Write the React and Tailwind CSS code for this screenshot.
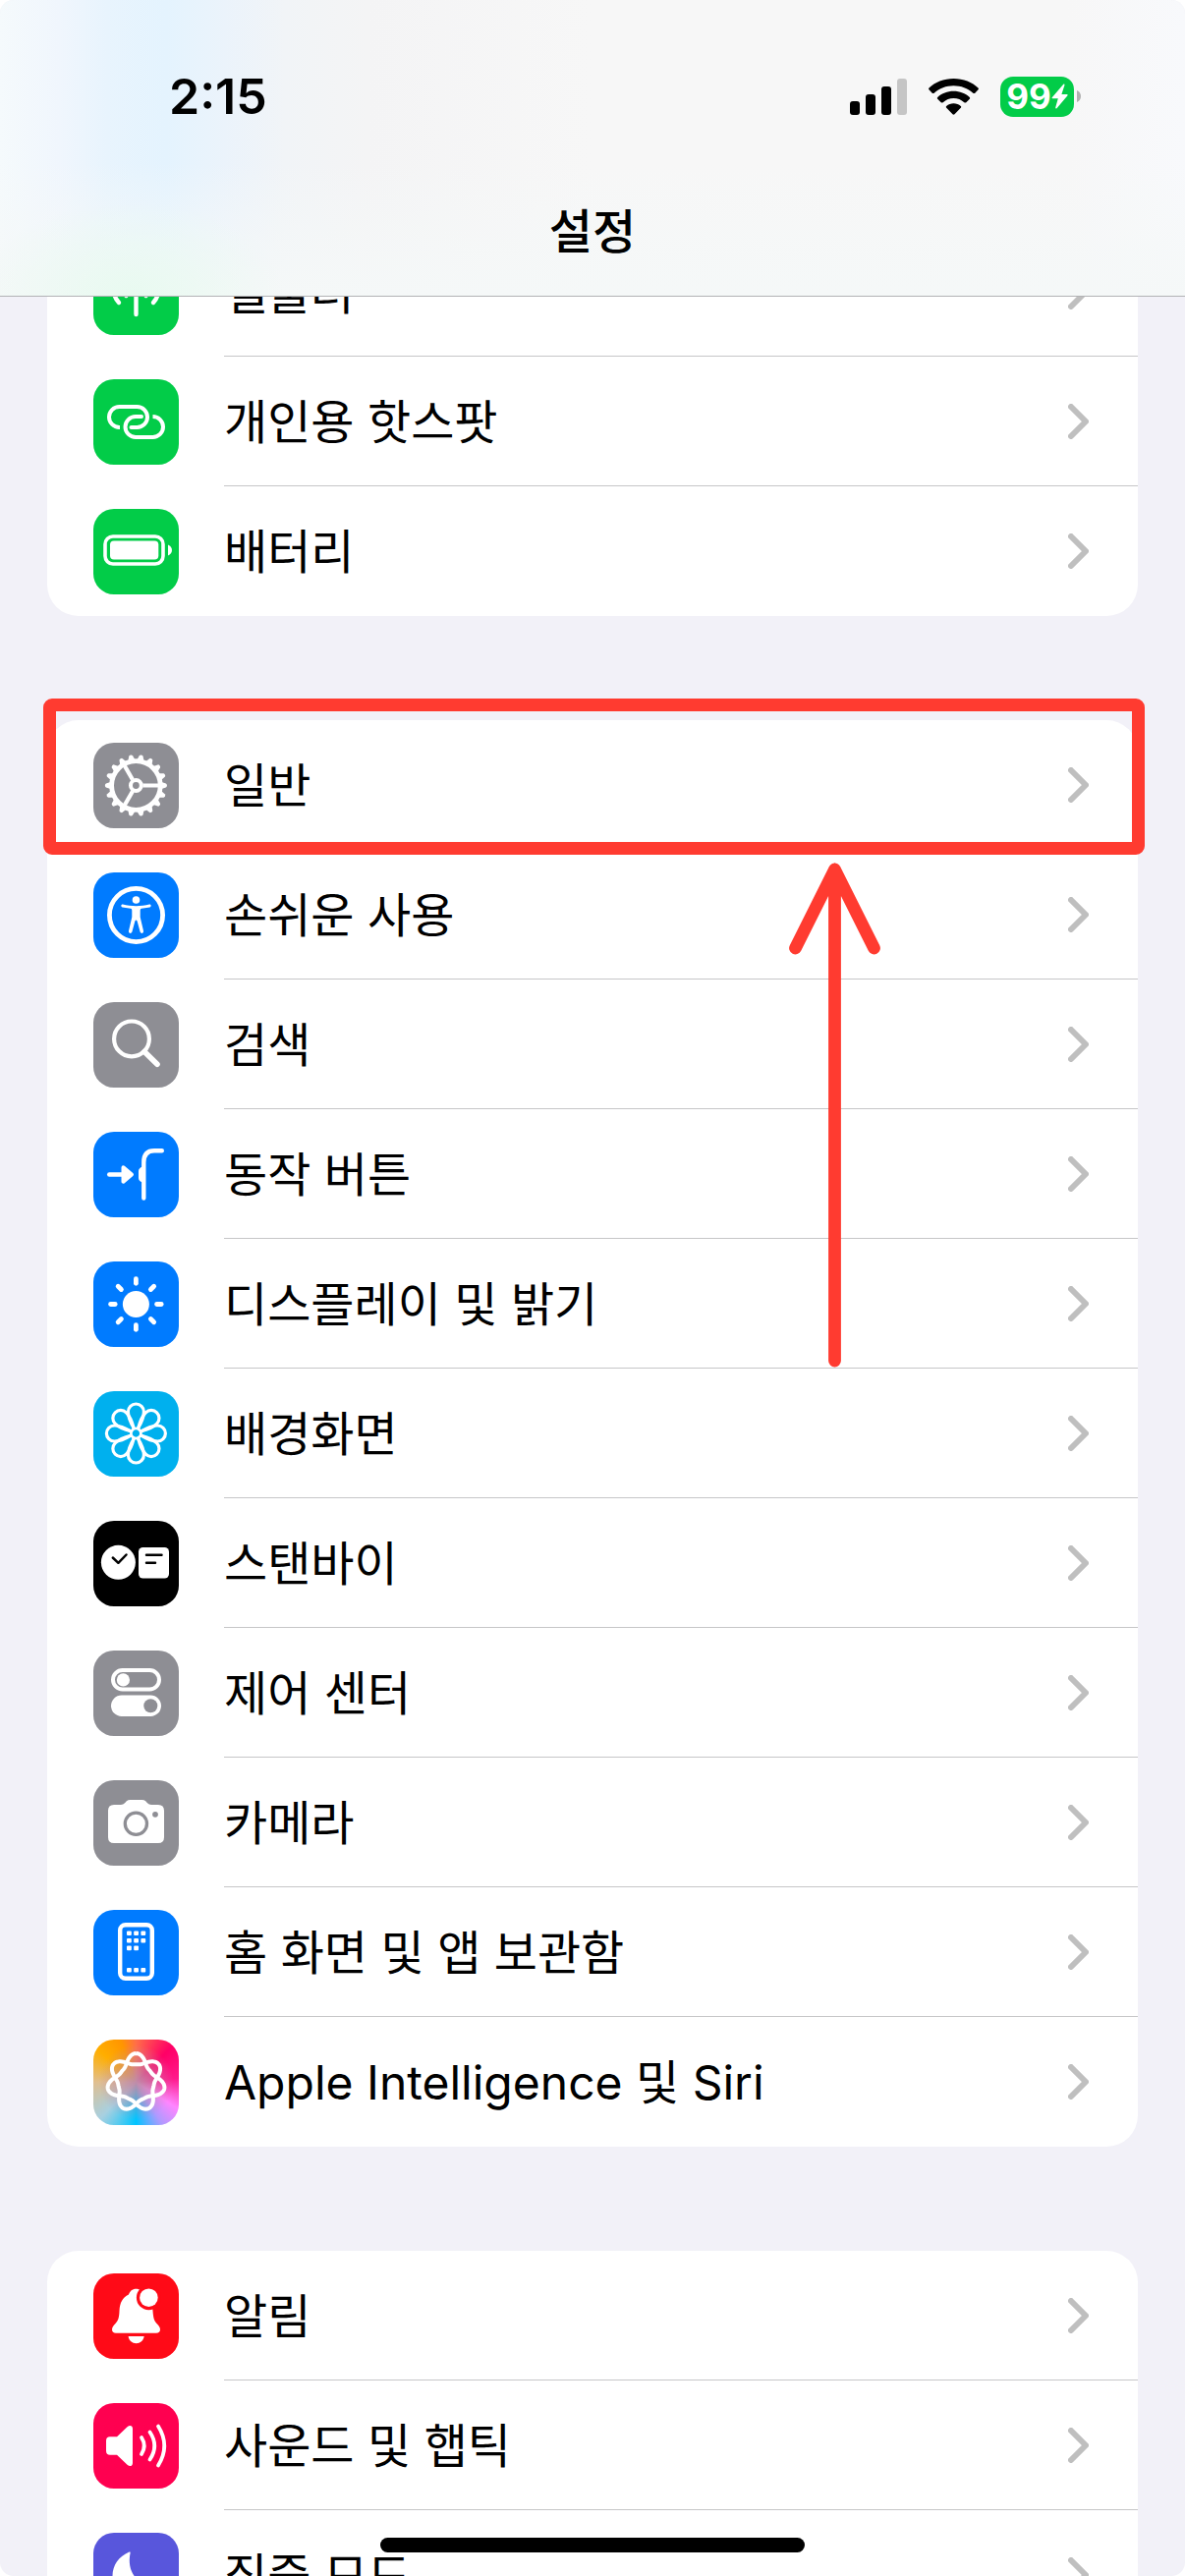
import React from 'react'

const CellularIcon = () => (
  <g stroke="#fff" strokeWidth="4.4" strokeLinecap="round" fill="none">
    <path d="M43.5 40V66" />
    <path d="M26 54A24 24 0 0 1 26 22M61 54A24 24 0 0 0 61 22" />
    <path d="M33.5 47A14 14 0 0 1 33.5 29M53.5 47A14 14 0 0 0 53.5 29" />
    <circle cx="43.5" cy="38" r="4" fill="#fff" stroke="none" />
  </g>
)

const HotspotIcon = () => (
  <g stroke="#fff" strokeWidth="4" fill="none">
    <path d="M27 49H26.5A10.5 10.5 0 0 1 26.5 28H44.5A10.5 10.5 0 0 1 44.5 49H38.5" />
    <path d="M49 38H43A10.5 10.5 0 0 0 43 59H60.5A10.5 10.5 0 0 0 60.5 38" />
    <g strokeWidth="0" fill="#fff">
      <circle cx="49" cy="38" r="2" />
      <circle cx="38.5" cy="49" r="2" />
    </g>
  </g>
)

const BatteryIcon = () => (
  <g>
    <rect x="12" y="28" width="59" height="28" rx="8" fill="none" stroke="#fff" strokeWidth="3.6" />
    <rect x="17" y="32.6" width="49.3" height="19" rx="4" fill="#fff" />
    <path d="M76 36.5C78.5 37.5 80 39.6 80 42S78.5 46.5 76 47.5Z" fill="#fff" />
  </g>
)

const teeth = Array.from({ length: 18 }, (_, i) => i * 20)

const GearIcon = () => (
  <g transform="translate(43.4 43.5)" stroke="#fff" fill="none">
    <circle r="24.8" strokeWidth="4.8" />
    <circle r="5.4" strokeWidth="4" />
    {teeth.map((a) => (
      <path key={a} d="M26 -3.6L30.5 -1.9Q31.5 -1.5 31.5 0T30.5 1.9L26 3.6Z" fill="#fff" stroke="none" transform={`rotate(${a})`} />
    ))}
    {[0, 120, 240].map((a) => (
      <path key={a} d="M7 0H24" strokeWidth="4.2" transform={`rotate(${a})`} />
    ))}
  </g>
)

const AccessibilityIcon = () => (
  <g>
    <circle cx="43.5" cy="43.5" r="27.1" fill="none" stroke="#fff" strokeWidth="4.8" />
    <circle cx="43.5" cy="28" r="3.8" fill="#fff" />
    <path
      d="M30 32.5C34 33.6 39 34.2 43.5 34.2S53 33.6 57 32.5C59 32.2 59.3 35 57.4 35.5L49 36.7Q47.7 37 47.7 38.5V45.5L51 59.5C51.4 62 48.6 63 47.6 60.6L44.6 49.5Q43.5 47.5 42.4 49.5L39.4 60.6C38.4 63 35.6 62 36 59.5L39.3 45.5V38.5Q39.3 37 38 36.7L29.6 35.5C27.7 35 28 32.2 30 32.5Z"
      fill="#fff"
    />
  </g>
)

const SearchIcon = () => (
  <g fill="none" stroke="#fff" strokeLinecap="round">
    <circle cx="39" cy="37.4" r="17.9" strokeWidth="4.2" />
    <path d="M52 50.5L65 63.3" strokeWidth="5.6" />
  </g>
)

const ActionIcon = () => (
  <g>
    <path d="M16.3 43.5H31" stroke="#fff" strokeWidth="4.6" strokeLinecap="round" />
    <path d="M30.5 36.3L39 43.5L30.5 50.7Z" fill="#fff" stroke="#fff" strokeWidth="4" strokeLinejoin="round" />
    <path d="M51.3 67.5V31Q51.3 19.3 62 19.3H69.8" fill="none" stroke="#fff" strokeWidth="4.4" strokeLinecap="round" />
    <path d="M50 35.5Q46 37 46 40V47Q46 50 50 51.5Z" fill="#fff" />
  </g>
)

const SunIcon = () => (
  <g transform="translate(43.4 43.5)">
    <circle r="13.5" fill="#fff" />
    {[0, 45, 90, 135, 180, 225, 270, 315].map((a) => (
      <path key={a} d="M21.2 0H25.8" stroke="#fff" strokeWidth="4.8" strokeLinecap="round" transform={`rotate(${a})`} />
    ))}
  </g>
)

const FlowerIcon = () => (
  <g transform="translate(43.4 43)" fill="none" stroke="#fff" strokeWidth="3.2">
    {[0, 45, 90, 135, 180, 225, 270, 315].map((a) => (
      <path key={a} d="M0 -2C-3.5 -8 -8 -13 -8 -22A8 8 0 0 1 8 -22C8 -13 3.5 -8 0 -2Z" transform={`rotate(${a})`} />
    ))}
    <circle r="5" fill="#00b0ee" strokeWidth="2.6" />
  </g>
)

const StandByIcon = () => (
  <g>
    <circle cx="25.4" cy="42.3" r="17.5" fill="#fff" />
    <rect x="46" y="27" width="31" height="31.6" rx="4.5" fill="#fff" />
    <g stroke="#000" strokeWidth="2.5" strokeLinecap="round" strokeLinejoin="round" fill="none">
      <path d="M19.8 37.5L25.4 42.8L33.5 34.5" />
      <path d="M54 34.8H69.5M54 42.7H63" />
    </g>
  </g>
)

const ControlIcon = () => (
  <g>
    <rect x="20" y="20" width="47" height="19.4" rx="9.7" fill="none" stroke="#fff" strokeWidth="4" />
    <circle cx="30.4" cy="29.9" r="6.6" fill="#fff" />
    <rect x="18" y="45.5" width="51" height="21.5" rx="10.7" fill="#fff" />
    <circle cx="58.3" cy="56.3" r="7" fill="#8e8e94" />
  </g>
)

const CameraIcon = () => (
  <g>
    <path
      d="M21 25H28Q30.5 25 32 23.3L33.8 21.3Q35.2 20 37.5 20H49.5Q51.8 20 53.2 21.3L55 23.3Q56.5 25 59 25H66Q72 25 72 31V58Q72 64 66 64H21Q15 64 15 58V31Q15 25 21 25Z"
      fill="#fff"
    />
    <circle cx="43.4" cy="44.3" r="11.1" fill="none" stroke="#8e8e94" strokeWidth="3.3" />
    <circle cx="63" cy="34.8" r="2.9" fill="#8e8e94" />
  </g>
)

const appDots = [
  [34, 21.4], [41.2, 21.4], [48.4, 21.4],
  [34, 29], [41.2, 29], [48.4, 29],
  [34, 36.6], [41.2, 36.6],
  [34, 59], [41.2, 59], [48.4, 59],
]

const HomeIcon = () => (
  <g>
    <rect x="27.2" y="15.2" width="32.6" height="54.6" rx="5.5" fill="none" stroke="#fff" strokeWidth="4.4" />
    {appDots.map(([x, y]) => (
      <rect key={`${x}-${y}`} x={x} y={y} width="4.8" height="4.6" rx="1" fill="#fff" />
    ))}
  </g>
)

// one closed line that winds twice around the centre and crosses itself seven times
const knot = Array.from({ length: 281 }, (_, i) => {
  const t = (i / 280) * Math.PI * 4
  const c = Math.cos(3.5 * t)
  const r = 21.2 + 5.6 * c + 2.7 * c * c
  const turn = t + 0.04 * Math.sin(3.5 * t)
  return `${i ? 'L' : 'M'}${(43.5 + r * Math.sin(turn)).toFixed(2)} ${(43.5 - r * Math.cos(turn)).toFixed(2)}`
}).join('')

const SiriIcon = () => <path d={knot} fill="none" stroke="#fff" strokeWidth="4" strokeLinejoin="round" />

const BellIcon = () => (
  <g fill="#fff">
    <path d="M43.5 15.7C39.6 15.7 37.2 18 36 21.5C29.5 24.5 27 30 26.5 38C26.3 44 25.5 48 22.5 51C20.5 53 19 55 19 57C19 59.5 20.5 60.7 23 60.7H64C66.5 60.7 68 59.5 68 57C68 55 66.5 53 64.5 51C61.5 48 61 44 60.5 38C60 30 57.5 24.5 51 21.5C49.8 18 47.4 15.7 43.5 15.7Z" />
    <circle cx="56.4" cy="24.7" r="12.5" fill="#ff0a17" />
    <circle cx="56.4" cy="24.7" r="9.3" />
    <path d="M35.6 64H51.7C51 68.5 47.7 71.2 43.6 71.2S36.2 68.5 35.6 64Z" />
  </g>
)

const SoundIcon = () => (
  <g>
    <path d="M17 34.3H24L34.5 24.2C37 22 40 22.6 40 26V61C40 64.4 37 65 34.5 62.8L24 52.7H17Q13 52.7 13 48.7V38.3Q13 34.3 17 34.3Z" fill="#fff" />
    <path
      d="M49 35Q54.5 43.5 49 52M57.5 29.5Q67 43.5 57.5 57.5M66 23.5Q78.5 43.5 66 63.5"
      fill="none"
      stroke="#fff"
      strokeWidth="3.8"
      strokeLinecap="round"
    />
  </g>
)

const MoonIcon = () => (
  <path d="M36.5 19.5C26 24 19.5 33 19.5 44A24 24 0 0 0 43.5 68C54 68 63 61.5 67 51.5C49 57 33 43 37.6 20.6Q38 19 36.5 19.5Z" fill="#fff" />
)

const groups = [
  [
    { label: '셀룰러', icon: CellularIcon, bg: 'bg-[#02cc48]' },
    { label: '개인용 핫스팟', icon: HotspotIcon, bg: 'bg-[#02cc48]' },
    { label: '배터리', icon: BatteryIcon, bg: 'bg-[#02cc48]' },
  ],
  [
    { label: '일반', icon: GearIcon, bg: 'bg-[#8e8e94]', marked: true },
    { label: '손쉬운 사용', icon: AccessibilityIcon, bg: 'bg-[#007bff]' },
    { label: '검색', icon: SearchIcon, bg: 'bg-[#8e8e94]' },
    { label: '동작 버튼', icon: ActionIcon, bg: 'bg-[#007bff]' },
    { label: '디스플레이 및 밝기', icon: SunIcon, bg: 'bg-[#007bff]' },
    { label: '배경화면', icon: FlowerIcon, bg: 'bg-[#00b0ee]' },
    { label: '스탠바이', icon: StandByIcon, bg: 'bg-black' },
    { label: '제어 센터', icon: ControlIcon, bg: 'bg-[#8e8e94]' },
    { label: '카메라', icon: CameraIcon, bg: 'bg-[#8e8e94]' },
    { label: '홈 화면 및 앱 보관함', icon: HomeIcon, bg: 'bg-[#007bff]' },
    {
      label: 'Apple Intelligence 및 Siri',
      icon: SiriIcon,
      bg: 'bg-[radial-gradient(circle,#c08ca8_0%,transparent_62%),conic-gradient(#ff6e48,#ff0066_45deg,#ff1a8c_85deg,#ff85ff_122deg,#b09aff_148deg,#00c4ff_180deg,#a8d0e0_225deg,#e0bf90_270deg,#ffae00_310deg,#ff9500_340deg,#ff6e48)]',
    },
  ],
  [
    { label: '알림', icon: BellIcon, bg: 'bg-[#ff0a17]' },
    { label: '사운드 및 햅틱', icon: SoundIcon, bg: 'bg-[#ff0050]' },
    { label: '집중 모드', icon: MoonIcon, bg: 'bg-[#5856dc]' },
  ],
]

const StatusBar = () => (
  <div className="flex items-center justify-between pt-[66px] pl-[172px] pr-[106px]">
    <span className="text-[50px] leading-[64px] font-semibold">2:15</span>
    <div className="flex items-center">
      <svg className="w-[58px] h-[37px]" viewBox="0 0 58 37">
        <rect x="0" y="23" width="10" height="14" rx="3" />
        <rect x="16" y="16" width="10" height="21" rx="3" />
        <rect x="32" y="8" width="10" height="29" rx="3" />
        <rect x="48" y="0" width="10" height="37" rx="3" fill="#c5c5c5" />
      </svg>
      <svg className="ml-[22px] w-[51px] h-[37px]" viewBox="0 0 51 37">
        <path d="M25.5 0C35.5 0 44.5 3.8 50.5 9.5Q51.3 10.4 50.5 11.3L47.3 14.7Q46.3 15.5 45.3 14.7C40 10 33 7.3 25.5 7.3S11 10 5.7 14.7Q4.7 15.5 3.7 14.7L.5 11.3Q-.3 10.4 .5 9.5C6.5 3.8 15.5 0 25.5 0Z" />
        <path d="M25.5 12.7C31.8 12.7 37.5 15 41.8 18.9Q42.7 19.8 41.8 20.7L38.3 24.2Q37.3 25 36.3 24.2C33.3 21.6 29.6 20 25.5 20S17.7 21.6 14.7 24.2Q13.7 25 12.7 24.2L9.2 20.7Q8.3 19.8 9.2 18.9C13.5 15 19.2 12.7 25.5 12.7Z" />
        <path d="M25.5 25.3C28.3 25.3 30.8 26.3 32.8 27.9Q33.7 28.8 32.8 29.7L26.5 36.3Q25.5 37.2 24.5 36.3L18.2 29.7Q17.3 28.8 18.2 27.9C20.2 26.3 22.7 25.3 25.5 25.3Z" />
      </svg>
      <div className="ml-[22px] flex h-[41px] w-[75px] items-center justify-center rounded-[13px] bg-[#02cc48] text-white">
        <span className="text-[35px] leading-[41px] font-bold">99</span>
        <svg className="w-[17px] h-[26px]" viewBox="0 0 17 26" fill="currentColor">
          <path d="M12.5 0.6L0.7 14.2Q0 15.2 1.2 15.2H6.8L4.2 24.5Q4.2 26 5.5 25.3L16.5 12.2Q17 11.2 16 11H10.4L13.5 1.5Q13.5 0 12.5 0.6Z" />
        </svg>
      </div>
      <svg className="ml-[3px] w-[4px] h-[12px]" viewBox="0 0 4 12">
        <path d="M0 0C2.5 1 4 3.3 4 6S2.5 11 0 12Z" fill="#b0b0b0" />
      </svg>
    </div>
  </div>
)

const Header = () => (
  <header className="sticky top-0 z-10 h-[302px] border-b border-[#b2b2b5] bg-[radial-gradient(ellipse_13%_32%_at_11%_100%,#e8faf0,transparent),linear-gradient(0deg,#f5f8f8,transparent_45%),linear-gradient(90deg,#f5fafc,#f0f6fd_5%,#e8f4fd_9%,#e4f3fe_14%,#ebf3fb_19%,#f1f4f7_24%,#f4f4f5_31%,#f7f7f7_50%,#f7f7f7_90%,#f8f9fc)]">
    <StatusBar />
    <h1 className="mt-[74px] text-center text-[48px] leading-[64px] font-medium">설정</h1>
  </header>
)

const UpArrow = () => (
  <svg
    className="pointer-events-none absolute top-[145px] right-[262px] w-[94px] h-[514px]"
    viewBox="0 0 94 514"
    fill="none"
    stroke="#ff3b30"
    strokeWidth="12.8"
    strokeLinecap="round"
    strokeLinejoin="round"
  >
    <path d="M47.5 507V7M7.5 87L47.5 7L87.5 87" />
  </svg>
)

const Row = ({ label, icon: Icon, bg, marked, last }) => (
  <li className="relative">
    <a href="#" className="flex h-[132px] items-center pl-[47px] pt-px">
      <span className={`h-[87px] w-[87px] shrink-0 overflow-hidden rounded-[21px] ${bg}`}>
        <svg className="h-full w-full" viewBox="0 0 87 87">
          <Icon />
        </svg>
      </span>
      <span className={`ml-[46px] flex flex-1 items-center justify-between self-stretch border-b pr-[50px] ${last ? 'border-transparent' : 'border-[#c6c6c8]'}`}>
        <span className="pt-[2px] text-[48px] leading-[64px]">{label}</span>
        <svg className="h-[36px] w-[21px]" viewBox="0 0 21 36" fill="none" stroke="#bfbfbf" strokeWidth="6" strokeLinecap="round" strokeLinejoin="round">
          <path d="M3 3L18 18L3 33" />
        </svg>
      </span>
    </a>
    {marked && <div className="pointer-events-none absolute -top-[22px] -right-[7px] -bottom-[5px] -left-[4px] z-1 rounded-[9px] border-[13px] border-[#ff3b30]" />}
  </li>
)

export default function App() {
  return (
    <div className="relative h-screen overflow-hidden bg-white text-black font-['Inter','Noto_Sans_CJK_KR',sans-serif]">
      <div className="h-full overflow-y-auto rounded-[14px] bg-[#f2f1f8] [scrollbar-width:none]">
        <Header />
        <main className="-mt-[71px] flex flex-col gap-[106px] px-12">
          {groups.map((rows) => (
            <section key={rows[0].label} className="relative">
              <ul className="rounded-[32px] bg-white">
                {rows.map((row, i) => (
                  <Row key={row.label} {...row} last={i === rows.length - 1} />
                ))}
              </ul>
              {rows.some((row) => row.marked) && <UpArrow />}
            </section>
          ))}
        </main>
      </div>
      <div className="absolute bottom-[24px] left-1/2 z-20 h-[15px] w-[432px] -translate-x-1/2 rounded-full bg-black" />
    </div>
  )
}
